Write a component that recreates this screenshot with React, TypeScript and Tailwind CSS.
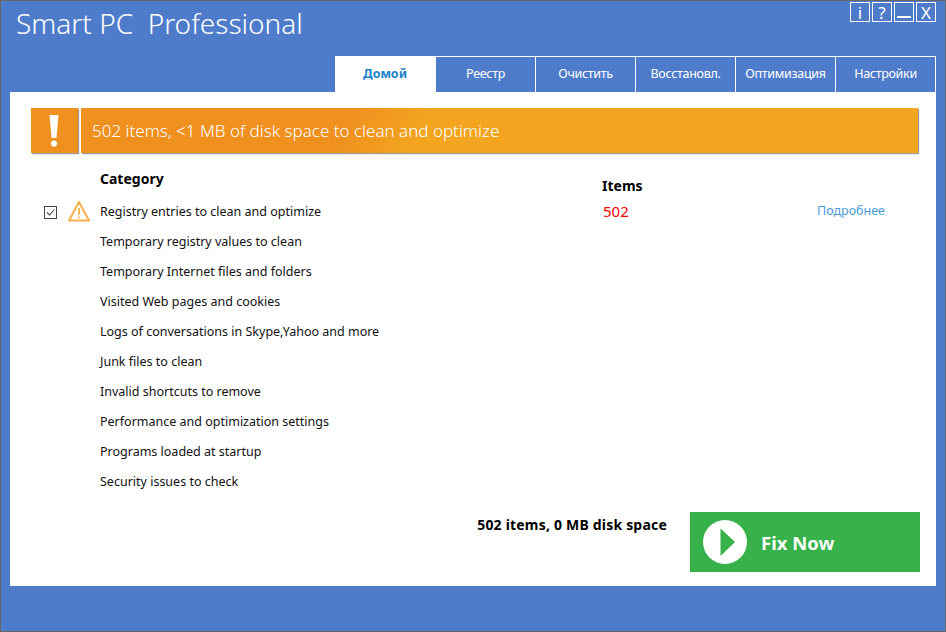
import React from "react";

const tabs = ["Реестр", "Очистить", "Восстановл.", "Оптимизация", "Настройки"];
const rows = [
  "Registry entries to clean and optimize",
  "Temporary registry values to clean",
  "Temporary Internet files and folders",
  "Visited Web pages and cookies",
  "Logs of conversations in Skype,Yahoo and more",
  "Junk files to clean",
  "Invalid shortcuts to remove",
  "Performance and optimization settings",
  "Programs loaded at startup",
  "Security issues to check",
];

function WinBtn({ children }: { children: React.ReactNode }) {
  return (
    <div className="w-[20px] h-[20px] border border-white flex items-center justify-center text-white text-[17px] leading-none">
      {children}
    </div>
  );
}

export default function App() {
  return (
    <div className="w-[946px] h-[632px] flex flex-col bg-[#4e7ccb] border border-[#666] font-['Noto_Sans','Open_Sans',sans-serif] overflow-hidden">
      <div className="h-[91px] shrink-0 flex flex-col">
        <div className="h-[55px] flex justify-between items-start">
          <div className="ml-[15px] mt-[3px] text-white text-[28px] leading-[38px] font-light whitespace-pre">Smart PC  Professional</div>
          <div className="flex gap-[2px] mr-[9px] mt-[1px]">
            <WinBtn>i</WinBtn>
            <WinBtn>?</WinBtn>
            <WinBtn><span className="block w-[14px] h-[2px] bg-white mt-[10px]" /></WinBtn>
            <WinBtn>X</WinBtn>
          </div>
        </div>
        <div className="flex justify-end mr-[9px] h-[36px]">
          <div className="w-[101px] pr-[1px] bg-white text-[#1b82c9] font-bold text-[12.5px] flex items-center justify-center">Домой</div>
          {tabs.map((t) => (
            <div key={t} className="w-[100px] border-t border-r border-white text-white text-[12.5px] flex items-center justify-center whitespace-nowrap tracking-[-0.3px]">{t}</div>
          ))}
        </div>
      </div>
      <div className="h-[494px] ml-[9px] mr-[9px] bg-white flex flex-col shrink-0">
        <div className="flex gap-[3px] mt-[16px] ml-[21px] mr-[18px] h-[45px] shrink-0">
          <div className="w-[47px] pr-[2px] bg-[#f0901f] shadow-[1px_1px_1px_#999] flex items-center justify-center text-white">
            <svg width="14" height="34" viewBox="0 0 14 34">
              <path d="M2.5 1h9L9.5 24H4.5z" fill="#fff" />
              <circle cx="7" cy="29.5" r="3.1" fill="#fff" />
            </svg>
          </div>
          <div className="flex-1 bg-[linear-gradient(120deg,#f0901f_32%,#f3a520_41%)] shadow-[1px_1px_1px_#999] flex items-center pl-[11px] text-white text-[17px] font-light">
            502 items, &lt;1 MB of disk space to clean and optimize
          </div>
        </div>
        <div className="flex flex-1">
          <div className="w-[90px] shrink-0 pl-[34px] pt-[47px] flex gap-[11px] items-start">
            <div className="w-[13px] h-[13px] mt-[6px] border border-[#444] flex items-center justify-center shrink-0">
              <svg width="11" height="11" viewBox="0 0 11 11"><path d="M2 5.5l2.5 2.5L9.5 2.5" fill="none" stroke="#444" strokeWidth="1.1" /></svg>
            </div>
            <svg width="22" height="22" viewBox="0 0 22 22" className="shrink-0">
              <path d="M11 2 L21 20.5 H1 Z" fill="none" stroke="#f7b04c" strokeWidth="2" strokeLinejoin="round" />
              <path d="M11 8v7" stroke="#f7b04c" strokeWidth="1.8" />
              <circle cx="11" cy="17.5" r="1" fill="#f7b04c" />
            </svg>
          </div>
          <div className="w-[502px] shrink-0 pt-[16px]">
            <div className="text-[14px] leading-[20px] font-bold text-black h-[31px]">Category</div>
            <div className="flex flex-col">
              {rows.map((r) => (
                <div key={r} className="h-[30px] text-[12.5px] leading-[24px] text-[#111] whitespace-nowrap">{r}</div>
              ))}
            </div>
          </div>
          <div className="w-[215px] shrink-0 pt-[23px]">
            <div className="text-[14px] leading-[20px] font-bold text-black">Items</div>
            <div className="text-[15px] leading-[20px] text-[#f00] mt-[5px] ml-[1px]">502</div>
          </div>
          <div className="pt-[48px] text-[12.5px] leading-[20px] text-[#4a9bd9] whitespace-nowrap">Подробнее</div>
        </div>
        <div className="flex justify-end items-start mr-[16px] mb-[14px] gap-[23px]">
          <div className="mt-[3px] text-[14px] leading-[20px] font-bold text-black whitespace-nowrap tracking-[0.2px]">502 items, 0 MB disk space</div>
          <div className="w-[230px] h-[60px] bg-[#37b24a] flex items-center pl-[13px] gap-[14px]">
            <svg width="44" height="44" viewBox="0 0 44 44" className="shrink-0">
              <circle cx="22" cy="22" r="22" fill="#fff" />
              <path d="M17.5 8.5 L32 22 L17.5 36 Z" fill="#37b24a" />
            </svg>
            <span className="text-white font-bold text-[18.5px] leading-[28px] mt-[1px]">Fix Now</span>
          </div>
        </div>
      </div>
    </div>
  );
}
